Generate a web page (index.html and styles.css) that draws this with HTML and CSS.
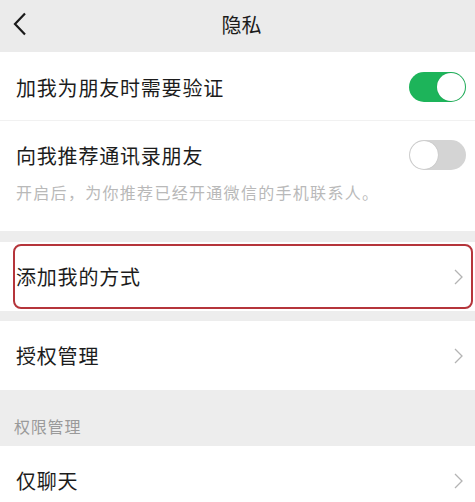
FILE: index.html
```html
<!DOCTYPE html>
<html lang="zh-CN">
<head>
  <meta charset="UTF-8">
  <title>隐私</title>
  <meta name="viewport" content="width=device-width, initial-scale=1.0">
  <link rel="stylesheet" href="styles.css">
</head>
<body>
  <div class="header">
    <svg class="back" width="14" height="24" viewBox="0 0 14 24">
      <path d="M12 1.5 L2 12 L12 22.5" fill="none" stroke="#1a1a1a" stroke-width="2.2"/>
    </svg>
    <div class="title">隐私</div>
  </div>

  <div class="group">
    <div class="row row-first">
      <span class="label">加我为朋友时需要验证</span>
      <div class="switch on"><span class="knob"></span></div>
    </div>
    <div class="row row-second">
      <div class="row-line">
        <span class="label">向我推荐通讯录朋友</span>
        <div class="switch"><span class="knob"></span></div>
      </div>
      <div class="sub">开启后，为你推荐已经开通微信的手机联系人。</div>
    </div>
  </div>

  <div class="gap"></div>

  <div class="row link highlighted">
    <span class="label">添加我的方式</span>
    <svg class="arrow" width="9" height="16" viewBox="0 0 9 16"><path d="M1 1 L8 8 L1 15" fill="none" stroke="#b4b4b4" stroke-width="1.3"/></svg>
  </div>

  <div class="gap small"></div>

  <div class="row link">
    <span class="label">授权管理</span>
    <svg class="arrow" width="9" height="16" viewBox="0 0 9 16"><path d="M1 1 L8 8 L1 15" fill="none" stroke="#b4b4b4" stroke-width="1.3"/></svg>
  </div>

  <div class="section">权限管理</div>

  <div class="row link">
    <span class="label">仅聊天</span>
    <svg class="arrow" width="9" height="16" viewBox="0 0 9 16"><path d="M1 1 L8 8 L1 15" fill="none" stroke="#b4b4b4" stroke-width="1.3"/></svg>
  </div>
</body>
</html>
```

FILE: styles.css
```css
body {
  margin: 0;
  padding: 0;
  font-family: "Noto Sans CJK SC", "Noto Sans", sans-serif;
  background: #ededed;
  color: #1c1c1c;
  overflow: hidden;
}
.header {
  height: 52px;
  display: flex;
  align-items: center;
  justify-content: center;
  position: relative;
  background: #ebebeb;
}
.back {
  position: absolute;
  left: 13px;
  top: 12px;
}
.title {
  font-size: 20px;
  margin: -4px 0 0 8px;
}
.group {
  background: #fff;
}
.row {
  background: #fff;
  padding: 0 9px 0 16px;
  display: flex;
  align-items: center;
  justify-content: space-between;
}
.label {
  font-size: 20px;
  letter-spacing: 0.8px;
}
.row-first {
  height: 69px;
  border-bottom: 1px solid #f1f1f1;
  padding-top: 2px;
  box-sizing: border-box;
}
.row-second {
  display: block;
  height: 110px;
  padding-top: 19px;
  box-sizing: border-box;
}
.row-line {
  display: flex;
  align-items: center;
  justify-content: space-between;
}
.sub {
  font-size: 16px;
  color: #b9b9b9;
  margin-top: 10px;
  letter-spacing: 1.3px;
}
.switch {
  width: 57px;
  height: 30px;
  border-radius: 15px;
  background: #d4d4d4;
  position: relative;
  box-sizing: border-box;
}
.switch .knob {
  position: absolute;
  left: 1px;
  top: 1px;
  width: 28px;
  height: 28px;
  border-radius: 50%;
  background: #fff;
  box-shadow: 0 0 1px rgba(0,0,0,0.25);
}
.switch.on {
  background: #1db45a;
}
.switch.on .knob {
  left: 28px;
}
.gap {
  height: 11px;
}
.gap.small {
  height: 10px;
}
.link {
  height: 69px;
  padding-right: 12px;
}
.highlighted {
  position: relative;
}
.highlighted::after {
  content: "";
  position: absolute;
  left: 13px;
  right: 2px;
  top: 2px;
  bottom: 2px;
  border: 2px solid #b5353b;
  border-radius: 8px;
}
.section {
  height: 56px;
  box-sizing: border-box;
  padding: 24px 0 0 14px;
  font-size: 16px;
  color: #9a9a9a;
  letter-spacing: 0.8px;
}
```
